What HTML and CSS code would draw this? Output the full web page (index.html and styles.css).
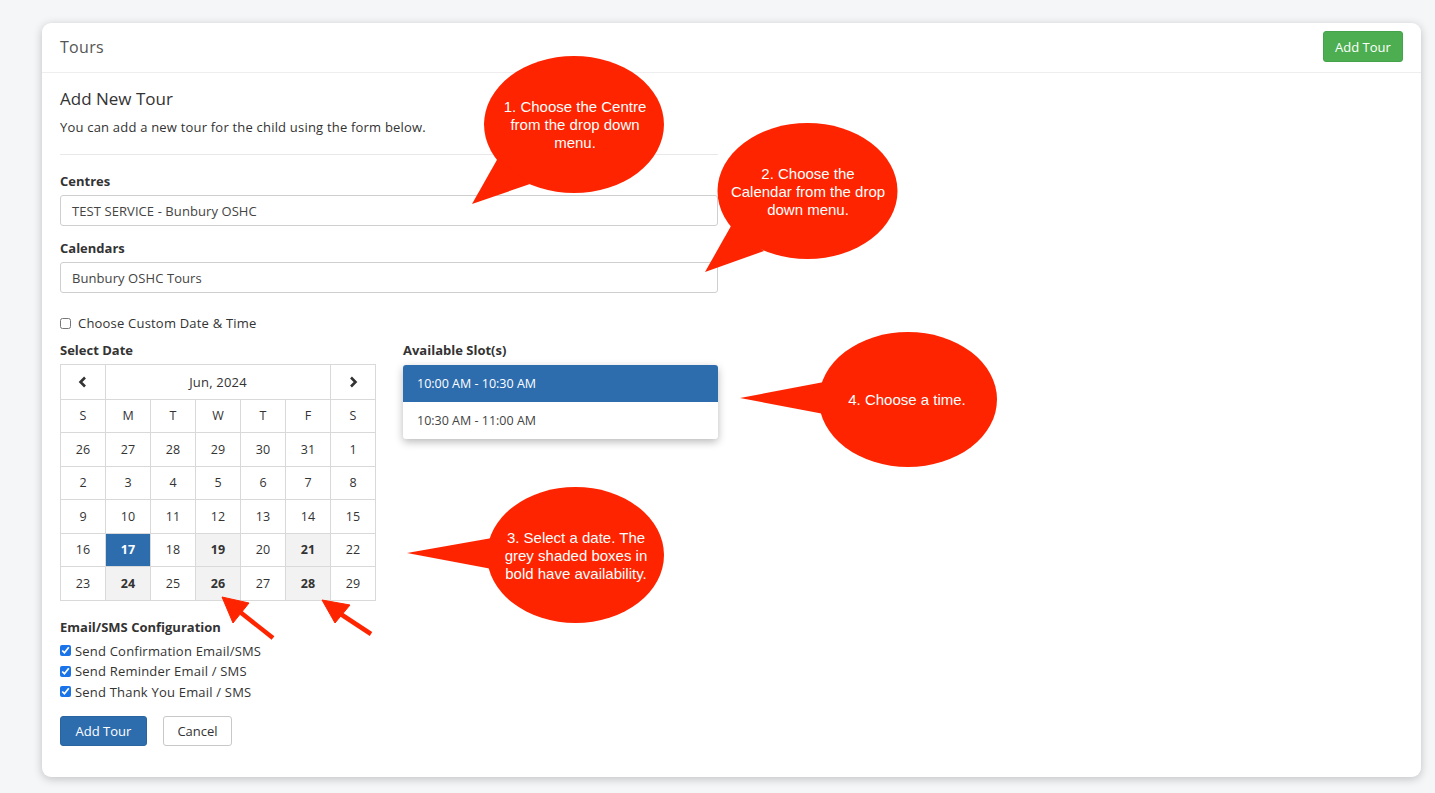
FILE: index.html
```html
<!DOCTYPE html>
<html>
<head>
<meta charset="utf-8">
<link rel="stylesheet" href="styles.css">
</head>
<body>
<div class="card">
  <div class="card-header">
    <div class="card-title">Tours</div>
    <button class="btn btn-green">Add Tour</button>
  </div>
  <div class="card-body">
    <div class="form">
      <h2 class="h-title">Add New Tour</h2>
      <p class="sub">You can add a new tour for the child using the form below.</p>
      <hr class="sep">
      <label class="lbl lbl-first">Centres</label>
      <div class="input">TEST SERVICE - Bunbury OSHC</div>
      <label class="lbl lbl-second">Calendars</label>
      <div class="input">Bunbury OSHC Tours</div>
      <div class="check-row custom"><input type="checkbox"><span>Choose Custom Date &amp; Time</span></div>
      <div class="pick-row">
        <div class="date-col">
          <div class="lbl">Select Date</div>
          <table class="cal">
            <tr class="cal-head">
              <td class="nav"><svg width="10" height="12" viewBox="0 0 10 12"><polyline points="7,1.5 2.5,6 7,10.5" fill="none" stroke="#333" stroke-width="2.6"/></svg></td>
              <td colspan="5" class="month">Jun, 2024</td>
              <td class="nav"><svg width="10" height="12" viewBox="0 0 10 12"><polyline points="3,1.5 7.5,6 3,10.5" fill="none" stroke="#333" stroke-width="2.6"/></svg></td>
            </tr>
            <tr class="dow"><td>S</td><td>M</td><td>T</td><td>W</td><td>T</td><td>F</td><td>S</td></tr>
            <tr class="tall"><td>26</td><td>27</td><td>28</td><td>29</td><td>30</td><td>31</td><td>1</td></tr>
            <tr><td>2</td><td>3</td><td>4</td><td>5</td><td>6</td><td>7</td><td>8</td></tr>
            <tr class="tall"><td>9</td><td>10</td><td>11</td><td>12</td><td>13</td><td>14</td><td>15</td></tr>
            <tr><td>16</td><td class="sel">17</td><td>18</td><td class="avail">19</td><td>20</td><td class="avail">21</td><td>22</td></tr>
            <tr class="tall"><td>23</td><td class="avail">24</td><td>25</td><td class="avail">26</td><td>27</td><td class="avail">28</td><td>29</td></tr>
          </table>
        </div>
        <div class="slot-col">
          <div class="lbl">Available Slot(s)</div>
          <div class="slots">
            <div class="slot active">10:00 AM - 10:30 AM</div>
            <div class="slot">10:30 AM - 11:00 AM</div>
          </div>
        </div>
      </div>
      <div class="lbl lbl-email">Email/SMS Configuration</div>
      <div class="checks">
        <div class="check-row"><input type="checkbox" checked><span>Send Confirmation Email/SMS</span></div>
        <div class="check-row"><input type="checkbox" checked><span>Send Reminder Email / SMS</span></div>
        <div class="check-row"><input type="checkbox" checked><span>Send Thank You Email / SMS</span></div>
      </div>
      <div class="actions">
        <button class="btn btn-blue">Add Tour</button>
        <button class="btn btn-white">Cancel</button>
      </div>
    </div>
  </div>
</div>

<svg class="overlay" width="1435" height="793" viewBox="0 0 1435 793">
  <g fill="#fe2400">
    <ellipse cx="574" cy="124.5" rx="90" ry="68.5"/>
    <polygon points="498,158 530,184 472,204"/>
    <ellipse cx="807.5" cy="191" rx="90" ry="68"/>
    <polygon points="731,226 764,251 705,272"/>
    <ellipse cx="908" cy="399.5" rx="89" ry="67.5"/>
    <polygon points="824,382 824,414 740,398"/>
    <ellipse cx="575.5" cy="555" rx="88.5" ry="68"/>
    <polygon points="492,538 492,569 407,553"/>
  </g>
  <g fill="#fe2400" stroke="#fe2400">
    <line x1="273" y1="638" x2="235" y2="608" stroke-width="4.5"/>
    <polygon points="222,597 233,623 249,603" stroke-width="1"/>
    <line x1="371" y1="634" x2="336" y2="611" stroke-width="4.5"/>
    <polygon points="322,600 335,623 350,605" stroke-width="1"/>
  </g>
  <g class="btext" fill="#fff" text-anchor="middle">
    <text x="575" y="112">1. Choose the Centre</text>
    <text x="575" y="130">from the drop down</text>
    <text x="575" y="148">menu.</text>
    <text x="808" y="179">2. Choose the</text>
    <text x="808" y="197">Calendar from the drop</text>
    <text x="808" y="215">down menu.</text>
    <text x="907" y="405">4. Choose a time.</text>
    <text x="576" y="543">3. Select a date. The</text>
    <text x="576" y="561">grey shaded boxes in</text>
    <text x="576" y="579">bold have availability.</text>
  </g>
</svg>
</body>
</html>
```

FILE: styles.css
```css
html, body {
  margin: 0;
  padding: 0;
}
body {
  background: #f5f6f8;
  font-family: "Open Sans", "Noto Sans", sans-serif;
  color: #333;
  position: relative;
  width: 1435px;
  height: 793px;
  overflow: hidden;
  padding-top: 23px;
  padding-left: 42px;
  box-sizing: border-box;
}
.card {
  width: 1379px;
  height: 754px;
  background: #fff;
  border-radius: 9px;
  box-shadow: 0 2px 10px rgba(0, 0, 0, 0.22);
  box-sizing: border-box;
}
.card-header {
  height: 50px;
  border-bottom: 1px solid #eeeeee;
  display: flex;
  align-items: center;
  justify-content: space-between;
  padding: 0 18px;
  box-sizing: border-box;
}
.card-title {
  font-size: 16px;
  letter-spacing: 0.3px;
  color: #555;
  margin-top: -2px;
}
.btn {
  font-family: inherit;
  font-size: 13px;
  border-radius: 3px;
  cursor: pointer;
  box-sizing: border-box;
}
.btn-green {
  width: 80px;
  height: 31px;
  background: #4cae50;
  border: 1px solid #45a349;
  color: #fff;
  margin-top: -2px;
}
.card-body {
  padding: 0 18px;
}
.form {
  width: 658px;
}
.h-title {
  margin: 16px 0 0;
  font-size: 17px;
  line-height: 20px;
  font-weight: 500;
  color: #333;
}
.sub {
  margin: 8px 0 0;
  font-size: 13px;
  letter-spacing: 0.2px;
  line-height: 20px;
  color: #333;
}
.sep {
  margin: 17px 0 0;
  border: 0;
  border-top: 1px solid #e8e8e8;
}
.lbl {
  display: block;
  font-size: 13px;
  line-height: 18px;
  font-weight: 700;
  color: #333;
}
.lbl-first { margin-top: 17px; }
.lbl-second { margin-top: 13px; }
.input {
  margin-top: 5px;
  height: 31px;
  border: 1px solid #cfcfcf;
  border-radius: 3px;
  box-sizing: border-box;
  padding: 0 11px;
  display: flex;
  align-items: center;
  font-size: 13px;
  letter-spacing: 0.08px;
  color: #444;
}
.check-row {
  display: flex;
  align-items: center;
  font-size: 13px;
  letter-spacing: 0.2px;
  line-height: 20.5px;
  color: #333;
}
.check-row input {
  margin: 0 4px 0 0;
  width: 11px;
  height: 11px;
  accent-color: #1a73e8;
}
.custom {
  margin-top: 20px;
}
.custom input {
  margin-right: 7px;
}
.pick-row {
  display: flex;
  gap: 27px;
  margin-top: 7px;
}
.cal {
  margin-top: 5px;
  border-collapse: collapse;
  width: 316px;
  table-layout: fixed;
}
.cal td {
  border: 1px solid #d9d9d9;
  text-align: center;
  font-size: 12.5px;
  color: #333;
  height: 32px;
  padding: 0;
}
.cal .cal-head td {
  height: 34px;
}
.cal tr.tall td {
  height: 33px;
}
.cal .month {
  font-size: 13px;
  letter-spacing: 0.2px;
}
.cal .nav svg {
  display: block;
  margin: 0 auto;
}
.cal td.sel {
  background: #2d6dae;
  color: #fff;
  font-weight: 700;
}
.cal td.avail {
  background: #f2f2f2;
  font-weight: 700;
}
.slot-col {
  width: 315px;
}
.slots {
  margin-top: 6px;
  border-radius: 3px;
  box-shadow: 0 3px 8px rgba(0, 0, 0, 0.28);
  overflow: hidden;
  background: #fff;
}
.slot {
  height: 37px;
  display: flex;
  align-items: center;
  padding-left: 14px;
  font-size: 12.5px;
  color: #444;
}
.slot.active {
  background: #2d6dae;
  color: #fff;
}
.lbl-email {
  margin-top: 17px;
}
.checks {
  margin-top: 5px;
}
.actions {
  margin-top: 14px;
  display: flex;
  gap: 16px;
}
.btn-blue {
  width: 87px;
  height: 30px;
  background: #2d6dae;
  border: 1px solid #2a64a0;
  color: #fff;
}
.btn-white {
  width: 69px;
  height: 30px;
  background: #fff;
  border: 1px solid #c8c8c8;
  color: #333;
}
.overlay {
  position: absolute;
  left: 0;
  top: 0;
  pointer-events: none;
}
.btext {
  font-family: "Liberation Sans", Arial, sans-serif;
  font-size: 15px;
}
```
